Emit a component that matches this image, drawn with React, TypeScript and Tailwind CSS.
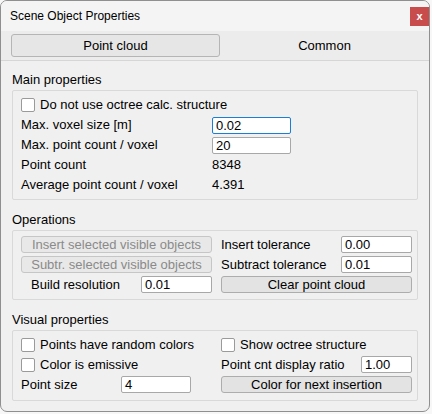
import React from 'react';

const font = { fontFamily: '"Liberation Sans", Arial, sans-serif' };

const Field: React.FC<{ value: string; w: string; focused?: boolean }> = ({ value, w, focused }) => (
  <div
    className={`${w} h-[17px] bg-white rounded-[2px] border pl-[3px] flex items-center text-[13px] leading-none ${
      focused ? 'border-[#1a7fd4]' : 'border-[#a8a8a8]'
    }`}
  >
    {value}
  </div>
);

const Check: React.FC<{ label: string }> = ({ label }) => (
  <div className="flex items-center gap-[5px] h-[17px]">
    <div className="w-[14px] h-[14px] bg-white border border-[#9a9a9a] rounded-[2px]" />
    <span>{label}</span>
  </div>
);

const Button: React.FC<{ label: string; disabled?: boolean }> = ({ label, disabled }) => (
  <div
    className={`w-[191px] h-[17px] rounded-[3px] border flex items-center justify-center ${
      disabled ? 'bg-[#e8e8e8] border-[#c6c6c6] text-[#8a8a8a]' : 'bg-[#e3e3e3] border-[#adadad] text-black'
    }`}
  >
    {label}
  </div>
);

const SectionLabel: React.FC<{ title: string; mt: string }> = ({ title, mt }) => (
  <div className={`${mt} h-[20px] leading-[20px] pl-[0px]`}>{title}</div>
);

const App: React.FC = () => {
  return (
    <div className="w-[432px] h-[414px] bg-[#f7f7f7]" style={font}>
      <div className="w-[430px] h-[412px] rounded-[7px] border border-[#8f8f8f] overflow-hidden bg-[#f0f0f0] flex flex-col text-[13px] text-black">
        {/* Title bar */}
        <div className="h-[30px] bg-[#f4f4f4] flex items-center pl-[9px] shrink-0">
          <span className="text-[12px]">Scene Object Properties</span>
          <div className="ml-auto mr-[0px] w-[19px] h-[19px] bg-[#c94c4c] flex items-center justify-center text-white text-[11px] font-bold leading-none">
            x
          </div>
        </div>

        {/* Tabs */}
        <div className="h-[30px] bg-[#ececec] border-b border-[#d6d6d6] flex items-center pl-[10px] shrink-0">
          <div className="w-[209px] h-[23px] rounded-[3px] border border-[#b5b5b5] bg-[#e6e6e6] flex items-center justify-center">
            Point cloud
          </div>
          <div className="flex-1 flex items-center justify-center">Common</div>
        </div>

        <div className="px-[11px]">
          {/* Main properties */}
          <SectionLabel title="Main properties" mt="mt-[9px]" />
          <div className="border border-[#d9d9d9] rounded-[2px] pt-[4px] pb-[4px] pl-[8px]">
            <div className="h-[20px] flex items-center">
              <Check label="Do not use octree calc. structure" />
            </div>
            <div className="h-[20px] flex items-center">
              <span className="w-[191px]">Max. voxel size [m]</span>
              <Field value="0.02" w="w-[79px]" focused />
            </div>
            <div className="h-[20px] flex items-center">
              <span className="w-[191px]">Max. point count / voxel</span>
              <Field value="20" w="w-[79px]" />
            </div>
            <div className="h-[20px] flex items-center">
              <span className="w-[191px]">Point count</span>
              <span>8348</span>
            </div>
            <div className="h-[20px] flex items-center">
              <span className="w-[191px]">Average point count / voxel</span>
              <span>4.391</span>
            </div>
          </div>

          {/* Operations */}
          <SectionLabel title="Operations" mt="mt-[10px]" />
          <div className="border border-[#d9d9d9] rounded-[2px] pt-[5px] pb-[6px] pl-[8px] grid grid-cols-[191px_191px] gap-x-[9px] gap-y-[3px]">
            <Button label="Insert selected visible objects" disabled />
            <div className="h-[17px] flex items-center">
              <span className="w-[120px]">Insert tolerance</span>
              <Field value="0.00" w="w-[71px]" />
            </div>
            <Button label="Subtr. selected visible objects" disabled />
            <div className="h-[17px] flex items-center">
              <span className="w-[120px]">Subtract tolerance</span>
              <Field value="0.01" w="w-[71px]" />
            </div>
            <div className="h-[17px] flex items-center pl-[10px]">
              <span className="w-[110px]">Build resolution</span>
              <Field value="0.01" w="w-[71px]" />
            </div>
            <Button label="Clear point cloud" />
          </div>

          {/* Visual properties */}
          <SectionLabel title="Visual properties" mt="mt-[10px]" />
          <div className="border border-[#d9d9d9] rounded-[2px] pt-[5px] pb-[7px] pl-[8px] grid grid-cols-[191px_191px] gap-x-[9px] gap-y-[3px]">
            <Check label="Points have random colors" />
            <Check label="Show octree structure" />
            <Check label="Color is emissive" />
            <div className="h-[17px] flex items-center">
              <span className="w-[140px]">Point cnt display ratio</span>
              <Field value="1.00" w="w-[51px]" />
            </div>
            <div className="h-[17px] flex items-center">
              <span className="w-[100px]">Point size</span>
              <Field value="4" w="w-[70px]" />
            </div>
            <Button label="Color for next insertion" />
          </div>
        </div>
      </div>
    </div>
  );
};

export default App;
